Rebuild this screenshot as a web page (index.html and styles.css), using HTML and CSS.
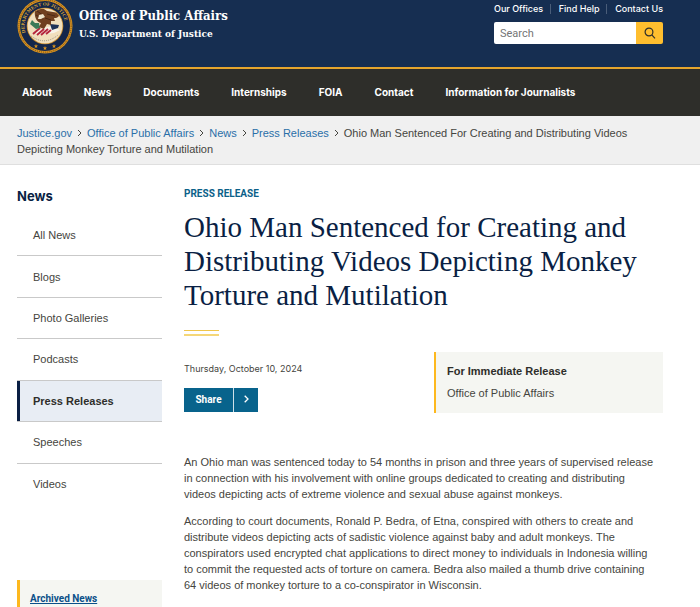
FILE: index.html
```html
<!DOCTYPE html>
<html lang="en">
<head>
    <meta charset="UTF-8">
    <meta name="viewport" content="width=device-width, initial-scale=1.0">
    <title>Office of Public Affairs | Press Releases</title>
    <link rel="stylesheet" href="styles.css">
</head>
<body>
    <header class="site-header">
        <a class="brand" href="#">
            <svg class="seal" viewBox="0 2 56 54" aria-hidden="true">
                <defs>
                    <path id="ringTop" d="M8.5 34.5 A20.5 20.5 0 1 1 47.5 34.5"/>
                    <clipPath id="disc"><circle cx="28" cy="28" r="17.5"/></clipPath>
                </defs>
                <circle cx="28" cy="28" r="27.5" fill="#d9921e"/>
                <circle cx="28" cy="28" r="26.2" fill="none" stroke="#6b4c20" stroke-width="1" stroke-dasharray="1 1"/>
                <circle cx="28" cy="28" r="25" fill="#14264a"/>
                <circle cx="28" cy="28" r="18.3" fill="#c98b2c"/>
                <circle cx="28" cy="28" r="17.5" fill="#f1dfbd"/>
                <text class="seal-text"><textPath href="#ringTop">DEPARTMENT OF JUSTICE</textPath></text>
                <g clip-path="url(#disc)">
                    <path d="M17 33 L34 28 L43 32 L37 35 L20 37 Z" fill="#f7f2e8"/>
                    <path d="M16 36 L23 30 M20 37 L27 31 M24 37 L31 31 M29 36 L34 32" stroke="#b5263c" stroke-width="2"/>
                    <path d="M33 26 L42 27 L41 30 L35 32 Z" fill="#1e3258"/>
                    <path d="M13 26 L15 22 L18 25 L22 25 L23 30 L19 31 Z" fill="#3a7b58"/>
                    <path d="M18 12 C22 9 27 10 30 13 L42 15 C43 19 40 20 37 20 L38 23 L34 23 L34 27 L30 26 L27 31 L22 29 L24 25 C19 24 17 18 18 12 Z" fill="#704020"/>
                    <path d="M20 13 L27 18 M19 17 L26 21 M30 16 L38 18 M28 20 L34 22" stroke="#4c2815" stroke-width="1"/>
                    <path d="M22 17 L26 16 L28 19 L24 21 L21 21 Z" fill="#efe5cd"/>
                </g>
                <path d="M14 38 Q28 48 41 37" fill="none" stroke="#9a927f" stroke-width="1" stroke-dasharray="1 1"/>
                <g fill="#d9921e">
                    <path d="M19 46l.6 1.4 1.5.1-1.2 1 .4 1.5-1.3-.8-1.3.8.4-1.5-1.2-1 1.5-.1z"/>
                    <path d="M28 48l.6 1.4 1.5.1-1.2 1 .4 1.5-1.3-.8-1.3.8.4-1.5-1.2-1 1.5-.1z"/>
                    <path d="M37 46l.6 1.4 1.5.1-1.2 1 .4 1.5-1.3-.8-1.3.8.4-1.5-1.2-1 1.5-.1z"/>
                </g>
            </svg>
            <span class="brand-text">
                <span class="brand-name">Office of Public Affairs</span>
                <span class="brand-dept">U.S. Department of Justice</span>
            </span>
        </a>
        <div class="header-tools">
            <ul class="quick-links">
                <li><a href="#">Our Offices</a></li>
                <li><a href="#">Find Help</a></li>
                <li><a href="#">Contact Us</a></li>
            </ul>
            <form class="search">
                <input type="search" placeholder="Search" aria-label="Search">
                <button type="submit" aria-label="Submit search">
                    <svg width="12" height="12" viewBox="0 0 12 12" fill="none" stroke="#2e2e2a" stroke-width="1.2"><circle cx="5" cy="5" r="3.9"/><path d="M7.8 7.8 L11 11.4"/></svg>
                </button>
            </form>
        </div>
    </header>

    <nav class="main-nav" aria-label="Main">
        <a href="#">About</a>
        <a href="#">News</a>
        <a href="#">Documents</a>
        <a href="#">Internships</a>
        <a href="#">FOIA</a>
        <a href="#">Contact</a>
        <a href="#">Information for Journalists</a>
    </nav>

    <nav class="breadcrumb" aria-label="Breadcrumb">
        <a href="#">Justice.gov</a><svg class="sep" viewBox="0 0 5 8"><path d="M1 1l3 3-3 3"/></svg><a href="#">Office of Public Affairs</a><svg class="sep" viewBox="0 0 5 8"><path d="M1 1l3 3-3 3"/></svg><a href="#">News</a><svg class="sep" viewBox="0 0 5 8"><path d="M1 1l3 3-3 3"/></svg><a href="#">Press Releases</a><svg class="sep" viewBox="0 0 5 8"><path d="M1 1l3 3-3 3"/></svg>Ohio Man Sentenced For Creating and Distributing Videos Depicting Monkey Torture and Mutilation
    </nav>

    <div class="page">
        <aside class="sidebar">
            <h2>News</h2>
            <ul class="side-nav">
                <li><a href="#">All News</a></li>
                <li><a href="#">Blogs</a></li>
                <li><a href="#">Photo Galleries</a></li>
                <li><a href="#">Podcasts</a></li>
                <li><a class="current" href="#">Press Releases</a></li>
                <li><a href="#">Speeches</a></li>
                <li><a href="#">Videos</a></li>
            </ul>
            <div class="archive">
                <a href="#">Archived News</a>
            </div>
        </aside>

        <main>
            <div class="kicker">PRESS RELEASE</div>
            <h1>Ohio Man Sentenced for Creating and Distributing Videos Depicting Monkey Torture and Mutilation</h1>
            <div class="rule"></div>
            <div class="meta">
                <div>
                    <div class="date">Thursday, October 10, 2024</div>
                    <button type="button" class="share">
                        <span class="share-label">Share</span>
                        <span class="share-arrow"><svg width="5" height="8" viewBox="0 0 5 8" fill="none" stroke="#fff" stroke-width="1.3"><path d="M.7.7L4 4 .7 7.3"/></svg></span>
                    </button>
                </div>
                <div class="release">
                    <strong>For Immediate Release</strong>
                    <span>Office of Public Affairs</span>
                </div>
            </div>
            <div class="body-text">
                <p>An Ohio man was sentenced today to 54 months in prison and three years of supervised release in connection with his involvement with online groups dedicated to creating and distributing videos depicting acts of extreme violence and sexual abuse against monkeys.</p>
                <p>According to court documents, Ronald P. Bedra, of Etna, conspired with others to create and distribute videos depicting acts of sadistic violence against baby and adult monkeys. The conspirators used encrypted chat applications to direct money to individuals in Indonesia willing to commit the requested acts of torture on camera. Bedra also mailed a thumb drive containing 64 videos of monkey torture to a co-conspirator in Wisconsin.</p>
            </div>
        </main>
    </div>
</body>
</html>
```
FILE: styles.css
```css
* {
    box-sizing: border-box;
}
body {
    margin: 0;
    background-color: #fff;
    color: #454540;
    font-family: "Liberation Sans", Arial, sans-serif;
    font-size: 11px;
    line-height: 16px;
}
a {
    color: inherit;
    text-decoration: none;
}
ul {
    list-style: none;
    margin: 0;
    padding: 0;
}

/* Header */
.site-header {
    display: flex;
    justify-content: space-between;
    align-items: flex-start;
    height: 69px;
    padding: 0 37px 0 17px;
    background-color: #162e51;
    border-bottom: 2px solid #e5a52d;
    color: #fff;
}
.brand {
    display: flex;
    gap: 6px;
}
.seal {
    width: 56px;
    height: 54px;
}
.seal-text {
    font-family: "Liberation Serif", serif;
    font-size: 5px;
    font-weight: bold;
    fill: #d9a63a;
}
.brand-text {
    display: flex;
    flex-direction: column;
    padding-top: 6px;
    font-family: "DejaVu Serif Condensed", "DejaVu Serif", serif;
    font-weight: bold;
}
.brand-name {
    font-size: 13px;
    line-height: 20px;
}
.brand-dept {
    font-size: 10px;
}
.header-tools {
    width: 169px;
}
.quick-links {
    display: flex;
    justify-content: space-between;
    font-family: Inter, sans-serif;
    font-size: 9px;
    font-weight: 500;
    line-height: 10px;
    padding-top: 4px;
    white-space: nowrap;
}
.quick-links li + li {
    border-left: 1px solid #4a5d79;
    padding-left: 8px;
}
.search {
    display: flex;
    margin-top: 8px;
    height: 22px;
}
.search input {
    flex: 1;
    min-width: 0;
    border: 0;
    border-radius: 2px 0 0 2px;
    padding: 0 6px;
    font-family: Roboto, sans-serif;
    font-size: 11px;
    color: #333;
}
.search input::placeholder {
    color: #757575;
}
.search button {
    display: flex;
    align-items: center;
    justify-content: center;
    width: 27px;
    padding: 0;
    border: 0;
    border-radius: 0 2px 2px 0;
    background-color: #ffbe2e;
    cursor: pointer;
}

/* Main navigation */
.main-nav {
    display: flex;
    gap: 32px;
    padding: 15px 22px 16px;
    background-color: #2e2e2a;
    color: #fff;
    font-family: Inter, sans-serif;
    font-size: 10px;
    font-weight: bold;
}

/* Breadcrumb */
.breadcrumb {
    padding: 9px 37px 7px 17px;
    border-bottom: 1px solid #dfdfdf;
    background-color: #f0f0f0;
}
.breadcrumb a {
    color: #2a6fa8;
}
.sep {
    width: 5px;
    height: 8px;
    margin: 0 5px;
    fill: none;
    stroke: #454540;
}

/* Page columns */
.page {
    display: grid;
    grid-template-columns: 145px 1fr;
    gap: 22px;
    padding: 20px 37px 0 17px;
}
.sidebar h2 {
    margin: 0 0 7px;
    color: #0a1f44;
    font-family: Inter, sans-serif;
    font-size: 13px;
    line-height: 22px;
}
.side-nav {
    display: grid;
    grid-auto-rows: 1fr;
    height: 290px;
}
.side-nav li {
    display: grid;
}
.side-nav li + li {
    border-top: 1px solid #c9c9c9;
}
.side-nav a {
    display: flex;
    align-items: center;
    padding: 0 16px;
}
.side-nav .current {
    border-left: 3px solid #0a1f44;
    padding-left: 13px;
    background-color: #e8edf4;
    color: #2e2e2a;
    font-weight: bold;
}
.archive {
    margin-top: 76px;
    padding: 10px 10px 1px;
    border-left: 3px solid #fdb81e;
    background-color: #f5f6f2;
}
.archive a {
    color: #0b5089;
    font-family: Roboto, sans-serif;
    font-size: 10px;
    font-weight: bold;
    text-decoration: underline;
}

/* Press release */
.kicker {
    color: #0b6189;
    font-family: Roboto, sans-serif;
    font-size: 10px;
    font-weight: bold;
    line-height: 18px;
}
h1 {
    margin: 7px 0 18px;
    color: #0a1f44;
    font-family: "Liberation Serif", serif;
    font-size: 29px;
    font-weight: normal;
    line-height: 34px;
}
.rule {
    width: 35px;
    height: 6px;
    border-top: 1px solid #f0c64c;
    border-bottom: 2px solid #f5d778;
}
.meta {
    display: grid;
    grid-template-columns: 1fr 229px;
    margin-top: 16px;
}
.date {
    margin: 9px 0 11px;
    font-family: Inter, sans-serif;
    font-size: 9px;
}
.share {
    display: flex;
    height: 24px;
    padding: 0;
    border: 0;
    background-color: #08638c;
    color: #fff;
    font-family: Roboto, sans-serif;
    font-size: 10px;
    font-weight: bold;
    line-height: 24px;
    cursor: pointer;
}
.share-label {
    width: 50px;
    border-right: 1px solid #cfe0e8;
}
.share-arrow {
    width: 24px;
}
.release {
    display: flex;
    flex-direction: column;
    gap: 6px;
    padding: 11px 11px 12px;
    border-left: 2px solid #fdb81e;
    background-color: #f5f6f2;
}
.release strong {
    color: #2e2e2a;
}
.body-text {
    margin-top: 41px;
    padding-right: 8px;
}
.body-text p {
    margin: 0 0 11px;
}
```
